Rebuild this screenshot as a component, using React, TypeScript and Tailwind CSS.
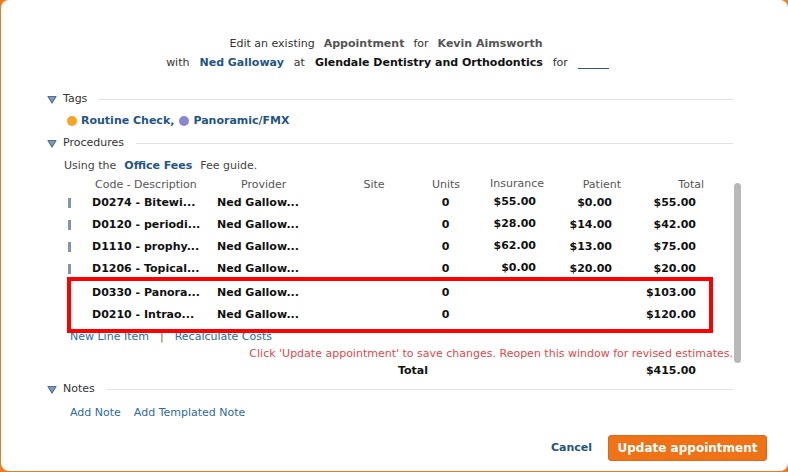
import React from "react";

type Row = {
  code: string;
  ins: string;
  pat: string;
  total: string;
  bar: boolean;
};

const rows: Row[] = [
  { code: "D0274 - Bitewi...", ins: "$55.00", pat: "$0.00", total: "$55.00", bar: true },
  { code: "D0120 - periodi...", ins: "$28.00", pat: "$14.00", total: "$42.00", bar: true },
  { code: "D1110 - prophy...", ins: "$62.00", pat: "$13.00", total: "$75.00", bar: true },
  { code: "D1206 - Topical...", ins: "$0.00", pat: "$20.00", total: "$20.00", bar: true },
];

const flagged: Row[] = [
  { code: "D0330 - Panora...", ins: "", pat: "", total: "$103.00", bar: false },
  { code: "D0210 - Intrao...", ins: "", pat: "", total: "$120.00", bar: false },
];

const cols = "grid grid-cols-[28px_125px_114px_86px_58px_71px_80px_85px]";

function Caret() {
  return (
    <svg width="10" height="9" viewBox="0 0 10 9" className="shrink-0">
      <path d="M1 1.5 H9 L5 8 Z" fill="#7d9bbd" stroke="#4f6f93" strokeWidth="1.2" strokeLinejoin="round" />
    </svg>
  );
}

function Section({ title }: { title: string }) {
  return (
    <div className="flex items-center h-[18px] pl-[46px] pr-[55px]">
      <Caret />
      <span className="ml-[6px] text-[11px] text-[#333]">{title}</span>
      <div className="ml-[12px] flex-1 h-px bg-[#e2e2e2]" />
    </div>
  );
}

function ProcRow({ r }: { r: Row }) {
  return (
    <div className={`${cols} h-[22px] items-center text-[11px] font-bold text-[#111]`}>
      <div className="pl-[4px]">
        {r.bar && <div className="w-[3px] h-[10px] bg-[#8592ad]" />}
      </div>
      <div>{r.code}</div>
      <div>Ned Gallow...</div>
      <div />
      <div className="text-center pr-[1px]">0</div>
      <div className="text-right pr-[10px] -translate-y-[1px]">{r.ins}</div>
      <div className="text-right pr-[14px]">{r.pat}</div>
      <div className="text-right pr-[15px]">{r.total}</div>
    </div>
  );
}

export default function App() {
  return (
    <div
      className="w-[788px] h-[472px] bg-[#ee7a22] overflow-hidden"
      style={{ fontFamily: '"DejaVu Sans", Verdana, sans-serif' }}
    >
      <div className="ml-[1px] w-[787px] h-[471px] bg-white rounded-[8px] relative">
        {/* heading */}
        <div className="pt-[36px] flex flex-col items-center text-[11px] text-[#333]">
          <div className="h-[17px] flex items-center pr-[17px]">
            <span>Edit an existing</span>
            <span className="mx-[9px] font-bold text-[#555]">Appointment</span>
            <span>for</span>
            <span className="ml-[9px] font-bold text-[#555]">Kevin Aimsworth</span>
          </div>
          <div className="h-[20px] flex items-center pr-[14px]">
            <span>with</span>
            <span className="mx-[10px] font-bold text-[#1f5583]">Ned Galloway</span>
            <span>at</span>
            <span className="mx-[10px] font-bold text-[#111]">Glendale Dentistry and Orthodontics</span>
            <span>for</span>
            <span className="ml-[10px] w-[31px] h-[12px] border-b border-[#2a5f8f]" />
          </div>
        </div>

        {/* tags */}
        <div className="mt-[17px]">
          <Section title="Tags" />
          <div className="h-[26px] flex items-center pl-[66px] text-[11px] font-bold text-[#1f5583]">
            <span className="w-[10px] h-[10px] rounded-full bg-[#f6a623]" />
            <span className="ml-[4px]">Routine Check,</span>
            <span className="ml-[5px] w-[10px] h-[10px] rounded-full bg-[#8a86d2]" />
            <span className="ml-[4px]">Panoramic/FMX</span>
          </div>
        </div>

        {/* procedures */}
        <div className="relative">
          <Section title="Procedures" />
          <div className="mt-[3px] pl-[63px] h-[22px] flex items-center text-[11px] text-[#444]">
            <span>Using the</span>
            <span className="mx-[8px] font-bold text-[#1f5583]">Office Fees</span>
            <span>Fee guide.</span>
          </div>

          <div className="pl-[63px]">
            <div className={`${cols} h-[15px] items-center text-[11px] text-[#555]`}>
              <div />
              <div className="pl-[3px]">Code - Description</div>
              <div className="pl-[24px]">Provider</div>
              <div className="text-center">Site</div>
              <div className="text-center">Units</div>
              <div className="text-right pr-[2px] -translate-y-[1px]">Insurance</div>
              <div className="text-right pr-[5px]">Patient</div>
              <div className="text-right pr-[7px]">Total</div>
            </div>
            {rows.map((r) => (
              <ProcRow key={r.code} r={r} />
            ))}
            <div className="relative mt-[2px] w-[647px]">
              {flagged.map((r) => (
                <ProcRow key={r.code} r={r} />
              ))}
              {/* highlight around the unestimated items */}
              <div className="absolute top-[-5px] bottom-[-7px] left-[3px] right-[-2px] border-[4px] border-[#ff0000] pointer-events-none" />
            </div>
          </div>

          <div className="mt-[3px] pl-[69px] h-[16px] flex items-center text-[11px] text-[#2d6a9f]">
            <span>New Line Item</span>
            <span className="mx-[11px] text-[#666]">|</span>
            <span>Recalculate Costs</span>
          </div>
          <div className="h-[18px] flex items-center justify-end pr-[55px] text-[11px] text-[#e0474b]">
            Click 'Update appointment' to save changes. Reopen this window for revised estimates.
          </div>
          <div className="pl-[63px]">
            <div className={`${cols} h-[12px] items-center text-[11px] font-bold text-[#111]`}>
              <div />
              <div />
              <div />
              <div />
              <div className="col-span-2 -ml-[19px]">Total</div>
              <div />
              <div className="text-right pr-[15px]">$415.00</div>
            </div>
          </div>

          {/* scrollbar */}
          <div className="absolute right-[47px] top-[49px] w-[7px] h-[180px] rounded-full bg-[#b8b8b8]" />
        </div>

        {/* notes */}
        <div className="mt-[5px]">
          <Section title="Notes" />
          <div className="h-[30px] flex items-center pl-[69px] text-[11px] text-[#2d6a9f]">
            <span>Add Note</span>
            <span className="ml-[13px]">Add Templated Note</span>
          </div>
        </div>

        {/* footer */}
        <div className="mt-[7px] h-[26px] flex items-center justify-end pr-[21px]">
          <span className="text-[11px] font-bold text-[#1f5583]">Cancel</span>
          <button className="ml-[16px] w-[159px] h-[26px] rounded-[3px] bg-[#ef7316] border border-[#d9681a] text-white font-bold text-[12px]">
            Update appointment
          </button>
        </div>
      </div>
    </div>
  );
}
